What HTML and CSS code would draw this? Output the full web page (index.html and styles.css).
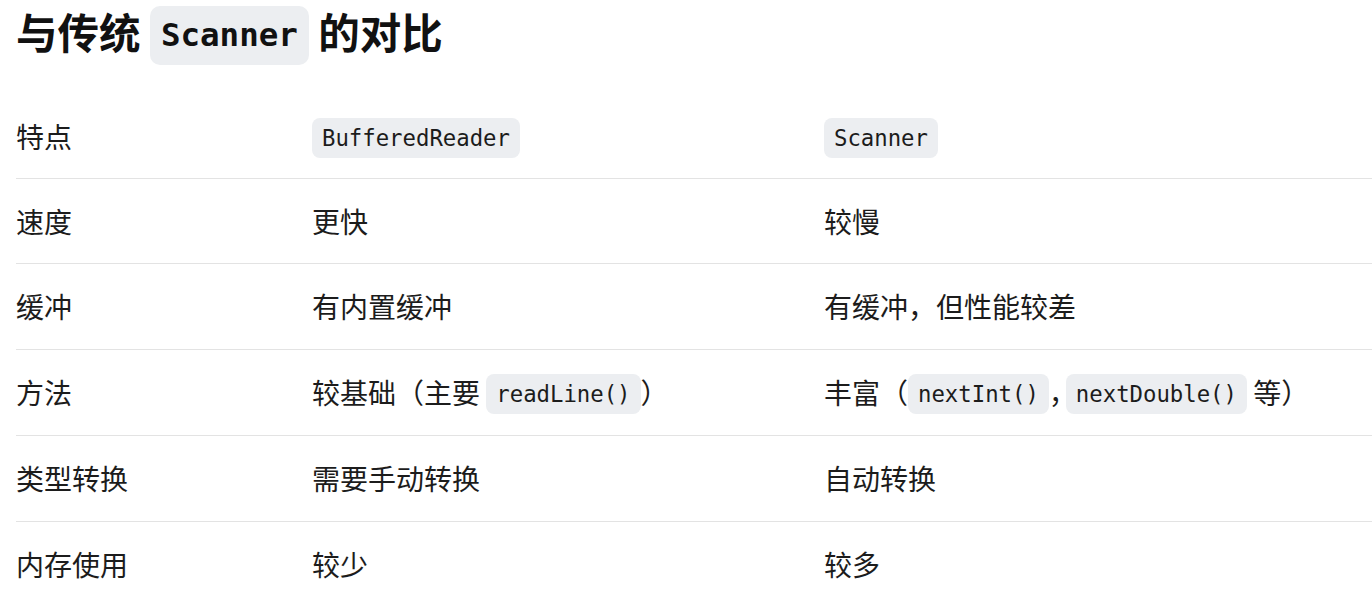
FILE: index.html
```html
<!DOCTYPE html>
<html lang="zh-CN">
<head>
<meta charset="utf-8">
<link rel="stylesheet" href="styles.css">
</head>
<body>
<div class="page">
  <h2 class="title">与传统 <code class="code-title">Scanner</code> 的对比</h2>
  <table class="cmp">
    <colgroup>
      <col class="c1"><col class="c2"><col class="c3">
    </colgroup>
    <thead>
      <tr><th>特点</th><th><code>BufferedReader</code></th><th><code>Scanner</code></th></tr>
    </thead>
    <tbody>
      <tr><td>速度</td><td>更快</td><td>较慢</td></tr>
      <tr><td>缓冲</td><td>有内置缓冲</td><td>有缓冲，但性能较差</td></tr>
      <tr><td>方法</td><td>较基础（主要 <code>readLine()</code>）</td><td>丰富（<code>nextInt()</code><span class="comma">，</span><code>nextDouble()</code> 等）</td></tr>
      <tr><td>类型转换</td><td>需要手动转换</td><td>自动转换</td></tr>
      <tr><td>内存使用</td><td>较少</td><td>较多</td></tr>
    </tbody>
  </table>
</div>
</body>
</html>
```
FILE: styles.css
```css
html, body {
  margin: 0;
  padding: 0;
  background: #ffffff;
  overflow: hidden;
}
body {
  font-family: "Noto Sans CJK SC", "Noto Sans", sans-serif;
  color: #1c1c1c;
  font-size: 28px;
}
.page {
  padding: 0 0 0 16px;
}
.title {
  margin: -1px 0 0;
  font-size: 41.5px;
  line-height: 64px;
  font-weight: 700;
  color: #111111;
}
code {
  font-family: "DejaVu Sans Mono", "Liberation Mono", monospace;
  font-size: 22.3px;
  background: #eceef1;
  border-radius: 8px;
  padding: 6px 10px;
  line-height: 28px;
  display: inline-block;
  vertical-align: 2px;
  color: #1c1c1c;
}
.code-title {
  font-size: 32.5px;
  line-height: 40px;
  padding: 9px 11px 10px;
  border-radius: 10px;
  font-weight: 700;
  color: #111;
  vertical-align: 3px;
}
.comma {
  margin-right: -11px;
}
.cmp {
  margin-top: 29px;
  border-collapse: collapse;
  width: 100%;
  table-layout: fixed;
}
.c1 { width: 296px; }
.c2 { width: 512px; }
.c3 { width: auto; }
.cmp th, .cmp td {
  text-align: left;
  font-weight: 400;
  padding: 21px 0 21.5px;
  line-height: 42px;
  vertical-align: middle;
  border-bottom: 1px solid #e3e3e3;
}
.cmp tbody tr:last-child td {
  border-bottom: none;
}
.cmp th {
  padding: 20.75px 0 20px;
}
```
